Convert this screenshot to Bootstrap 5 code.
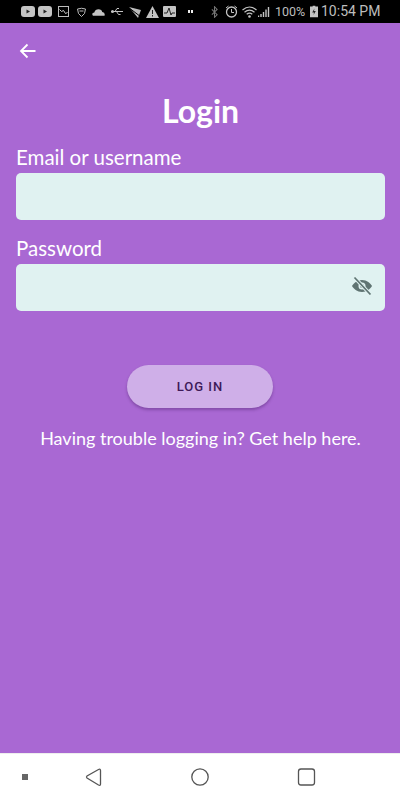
<!DOCTYPE html>
<html lang="en">
<head>
    <meta charset="UTF-8">
    <meta name="viewport" content="width=device-width, initial-scale=1.0">
    <title>Login</title>
    <link href="https://cdn.jsdelivr.net/npm/bootstrap@5.3.0/dist/css/bootstrap.min.css" rel="stylesheet">
    <style>
        html, body { height: 800px; overflow: hidden; }
        body { background: #a968d3; font-family: Lato, "Liberation Sans", sans-serif; color: #fff; }
        .phone { height: 800px; }
        .status-strip { height: 23px; background: #000; color: #bdbdbd; padding-left: 21px; font-family: Roboto, sans-serif; line-height: 23px; white-space: nowrap; }
        .status-strip svg { display: block; flex: none; }
        .sp1 { margin-left: 1px; }
        .sp3 { margin-left: 3px; }
        .sp4 { margin-left: 4px; }
        .sp5 { margin-left: 5px; }
        .sp6 { margin-left: 6px; }
        .sp7 { margin-left: 7px; }
        .sp8 { margin-left: 8px; }
        .sp12 { margin-left: 12px; }
        .sp18 { margin-left: 18px; }
        .status-pct { font-size: 12.5px; margin-left: 5px; width: 30px; }
        .status-time { font-size: 14px; margin-left: 3px; }
        .screen { background: #a968d3; padding: 0 15px 0 16px; }
        .back-row { height: 57px; padding-top: 20px; padding-left: 3px; }
        .back-row svg { display: block; }
        .page-title { font-family: Lato, sans-serif; font-size: 32px; font-weight: 700; line-height: 36px; margin: 13px 0 16px; text-align: center; }
        .field-label { font-size: 20.5px; line-height: 24px; margin: 0 0 4px; display: block; }
        .login-input { height: 47px; background: #e0f2f1; border: 0; border-radius: 5px; }
        .login-input:focus { background: #e0f2f1; box-shadow: none; }
        .first-field { margin-top: 2px; }
        .second-field { margin-top: 16px; }
        .eye-toggle { right: 12px; top: 12px; }
        .eye-toggle svg { display: block; }
        .login-btn { width: 146px; height: 43px; margin: 54px 0 0 -1px; border: 0; border-radius: 22px; background: #cfafe8; color: #3d1a58; font-family: Roboto, sans-serif; font-size: 13px; font-weight: 500; letter-spacing: 1px; box-shadow: 0 2px 3px rgba(60, 20, 90, .35); }
        .login-btn:hover { background: #cfafe8; color: #3d1a58; }
        .help-line { font-size: 18px; line-height: 24px; margin: 18px 0 0; text-align: center; }
        .nav-strip { height: 47px; background: #fff; border-top: 1px solid #eee; }
        .nav-strip svg { display: block; }
    </style>
</head>
<body>
    <div class="phone d-flex flex-column">
        <div class="status-strip d-flex align-items-center">
            <svg width="14" height="11" viewBox="0 0 14 11"><rect width="14" height="11" rx="3" fill="#c4c4c4"/><path d="M5.500 3.500v4l3.500-2z" fill="#222"/></svg>
            <svg width="14" height="11" class="sp3" viewBox="0 0 14 11"><rect width="14" height="11" rx="3" fill="#c4c4c4"/><path d="M5.500 3.500v4l3.500-2z" fill="#222"/></svg>
            <svg width="11" height="11" class="sp6" viewBox="0 0 11 11"><rect x=".5" y=".5" width="10" height="10" fill="none" stroke="#bbb"/><path d="M1.500 3.500l2 2 2-1 2 3 2-1" fill="none" stroke="#ccc"/></svg>
            <svg width="9" height="10" class="sp8" viewBox="0 0 9 10"><path d="M.5 2Q4.500 .5 8.500 2L7.500 6.500 4.500 9.500 1.500 6.500z" fill="none" stroke="#bbb"/><path d="M2.500 4h4" stroke="#bbb"/></svg>
            <svg width="13" height="8" class="sp6" viewBox="0 0 14 8"><path d="M1 8Q-1 5 2.500 4.500 3.500 1 7 1t4 3q3.500 .5 2.500 4z" fill="#c4c4c4"/></svg>
            <svg width="12" height="9" class="sp6" viewBox="0 0 12 9"><path d="M0 4.500h12M4 4.500L6 1.500h2M5.500 4.500L7.500 7.500h2" stroke="#c4c4c4" fill="none"/><circle cx="1.500" cy="4.500" r="1.500" fill="#c4c4c4"/></svg>
            <svg width="13" height="12" class="sp5" viewBox="0 0 13 12"><path d="M1 1l12 3-3 8z" fill="#bbb"/><path d="M0 1l13 10" stroke="#000"/></svg>
            <svg width="13" height="12" class="sp5" viewBox="0 0 13 12"><path d="M6.500 0L13 12H0z" fill="#c4c4c4"/><path d="M6.500 4v4M6.500 9v1.500" stroke="#222"/></svg>
            <svg width="13" height="11" class="sp4" viewBox="0 0 13 11"><rect width="13" height="11" rx="1" fill="#c4c4c4"/><path d="M1 7h3l2-5 2 7 1-2h3" fill="none" stroke="#222"/></svg>
            <svg width="5" height="3" class="sp12" viewBox="0 0 5 3"><path d="M0 0h2v3H0zM3 0h2v3H3z" fill="#eee"/></svg>
            <svg width="7" height="12" class="sp18" viewBox="0 0 8 12"><path d="M1 3l6 6-3 3V0l3 3-6 6" fill="none" stroke="#777" stroke-width="1.200"/></svg>
            <svg width="13" height="13" class="sp7" viewBox="0 0 13 13"><circle cx="6.500" cy="7" r="5" fill="none" stroke="#c4c4c4" stroke-width="1.300"/><path d="M6.500 4v3.500H9M1 3l2.500-2M12 3L9.500 1" fill="none" stroke="#c4c4c4"/></svg>
            <svg width="15" height="12" class="sp4" viewBox="0 0 15 12"><path d="M.5 4Q7.500-2 14.500 4M2.500 6.200Q7.500 2 12.500 6.200M4.700 8.300Q7.500 6 10.300 8.300" fill="none" stroke="#c4c4c4" stroke-width="1.200"/><circle cx="7.500" cy="10.500" r="1.300" fill="#c4c4c4"/></svg>
            <svg width="12" height="11" class="sp1" viewBox="0 0 12 11"><path d="M.5 11V9.500M3 11V8M5.500 11V6M8 11V3.500M10.500 11V1" stroke="#c4c4c4" stroke-width="1.400"/></svg>
            <span class="status-pct">100%</span>
            <svg width="8" height="13" class="sp5" viewBox="0 0 9 13"><path d="M3 0h3v1h3v12H0V1h3z" fill="#c4c4c4"/><path d="M5 3L2.500 7.500h2L4 10.500 6.500 6h-2z" fill="#222"/></svg>
            <span class="status-time">10:54 PM</span>
        </div>
        <main class="screen flex-grow-1">
            <div class="back-row">
                <svg width="17" height="16" viewBox="0 0 17 16"><path d="M16.500 8H2M8.500 1.500L2 8l6.500 6.500" fill="none" stroke="#fff" stroke-width="1.800"/></svg>
            </div>
            <h1 class="page-title">Login</h1>
            <form>
                <div class="first-field">
                    <label class="field-label" for="loginName">Email or username</label>
                    <input id="loginName" type="text" class="form-control login-input">
                </div>
                <div class="second-field">
                    <label class="field-label" for="loginPass">Password</label>
                    <div class="position-relative">
                        <input id="loginPass" type="password" class="form-control login-input">
                        <span class="eye-toggle position-absolute">
                            <svg width="22" height="20" viewBox="0 0 22 20"><path d="M11 4c5 0 8.500 3.500 10 6-1.500 2.500-5 6-10 6S2.500 12.500 1 10c1.500-2.500 5-6 10-6z" fill="#5f7472"/><circle cx="11" cy="10" r="3.500" fill="#e0f2f1"/><circle cx="11" cy="10" r="2" fill="#5f7472"/><path d="M3.500 1.500l15 16" stroke="#e0f2f1" stroke-width="3.500"/><path d="M3.500 1.500l16 17" stroke="#5f7472" stroke-width="1.800"/></svg>
                        </span>
                    </div>
                </div>
                <div class="text-center">
                    <button type="button" class="btn login-btn">LOG IN</button>
                </div>
            </form>
            <p class="help-line">Having trouble logging in? Get help here.</p>
        </main>
        <div class="nav-strip d-flex align-items-center">
            <svg width="400" height="46" viewBox="0 0 400 46">
                <rect x="22" y="20" width="6" height="6" fill="#666"/>
                <path d="M100.500 16.500v13.500q0 2-2 1L87 24q-1-1 0-2l11.500-6.500q2-1 2 1z" fill="none" stroke="#555" stroke-width="1.300"/>
                <circle cx="200" cy="23" r="8.200" fill="none" stroke="#555" stroke-width="1.300"/>
                <rect x="298.500" y="15" width="16" height="16" rx="2.500" fill="none" stroke="#555" stroke-width="1.300"/>
            </svg>
        </div>
    </div>
    <script src="https://cdn.jsdelivr.net/npm/bootstrap@5.3.0/dist/js/bootstrap.bundle.min.js"></script>
</body>
</html>
